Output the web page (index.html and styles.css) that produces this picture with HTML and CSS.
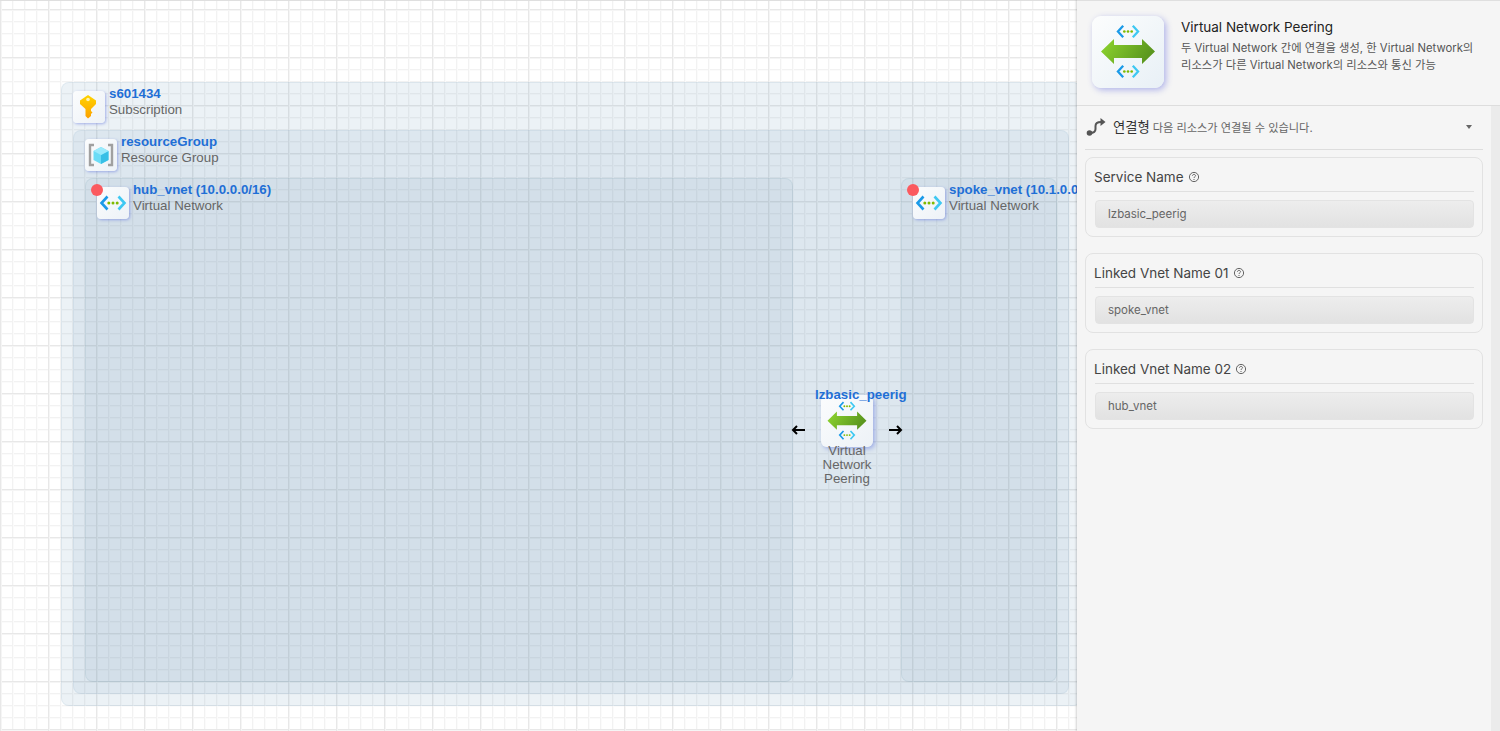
FILE: index.html
```html
<!DOCTYPE html>
<html lang="ko">
<head>
<meta charset="utf-8">
<title>Virtual Network Peering</title>
<link rel="stylesheet" href="styles.css">
</head>
<body>
<svg class="defs" width="0" height="0" aria-hidden="true">
  <defs>
    <linearGradient id="arrowGrad" x1="0" y1="0" x2="1" y2="0.3">
      <stop offset="0" stop-color="#8fd62f"/>
      <stop offset="1" stop-color="#5a961e"/>
    </linearGradient>
    <linearGradient id="keyGrad" x1="0" y1="0" x2="0" y2="1">
      <stop offset="0" stop-color="#ffd400"/>
      <stop offset="1" stop-color="#fca000"/>
    </linearGradient>
    <symbol id="vnet" viewBox="0 0 32 32">
      <path d="M10.500 9.500 4.500 16l6 6.500" fill="none" stroke="#1a9ae8" stroke-width="2.600"/>
      <path d="M21.500 9.500 27.500 16l-6 6.500" fill="none" stroke="#3ec8f2" stroke-width="2.600"/>
      <circle cx="11.800" cy="16" r="1.500" fill="#7fba00"/>
      <circle cx="16" cy="16" r="1.500" fill="#7fba00"/>
      <circle cx="20.200" cy="16" r="1.500" fill="#7fba00"/>
    </symbol>
    <symbol id="peer" viewBox="0 0 72 72">
      <use href="#vnet" x="22" y="1.500" width="28" height="28"/>
      <use href="#vnet" x="22" y="41.500" width="28" height="28"/>
      <path d="M9 35.500 22 23v6h28v-6l13 12.500L50 48v-6H22v6z" fill="url(#arrowGrad)"/>
    </symbol>
  </defs>
</svg>

<main class="canvas">
  <section class="group group-sub">
    <header class="group-head">
      <span class="icon-card">
        <svg class="icon" viewBox="0 0 32 32"><path d="M15 4 23 9.500V13L18 18v2l1.500 1.500L18 23v2l-3 2.500L12.500 25V18L7 13V9.500z" fill="url(#keyGrad)"/><circle cx="15" cy="8.500" r="1.800" fill="#fff3b0"/></svg>
      </span>
      <div class="group-text"><strong class="name">s601434</strong><span class="kind">Subscription</span></div>
    </header>
    <section class="group group-rg">
      <header class="group-head">
        <span class="icon-card">
          <svg class="icon" viewBox="0 0 32 32">
            <path d="M9 6H5v20h4" fill="none" stroke="#a0a0a0" stroke-width="2.400"/>
            <path d="M23 6h4v20h-4" fill="none" stroke="#a0a0a0" stroke-width="2.400"/>
            <path d="M16 8l7.500 4v9L16 25l-7.500-4v-9z" fill="#6adcf6"/>
            <path d="M16 16l7.500-4v9L16 25z" fill="#38bfe6"/>
            <path d="M16 8l7.500 4-7.500 4-7.500-4z" fill="#9aeafc"/>
          </svg>
        </span>
        <div class="group-text"><strong class="name">resourceGroup</strong><span class="kind">Resource Group</span></div>
      </header>
      <div class="vnet-row">
        <section class="group group-vnet group-hub">
          <span class="dot"></span>
          <header class="group-head">
            <span class="icon-card"><svg class="icon"><use href="#vnet"/></svg></span>
            <div class="group-text"><strong class="name">hub_vnet (10.0.0.0/16)</strong><span class="kind">Virtual Network</span></div>
          </header>
        </section>
        <section class="group group-vnet group-spoke">
          <span class="dot"></span>
          <header class="group-head">
            <span class="icon-card"><svg class="icon"><use href="#vnet"/></svg></span>
            <div class="group-text"><strong class="name">spoke_vnet (10.1.0.0/16)</strong><span class="kind">Virtual Network</span></div>
          </header>
        </section>
      </div>
    </section>
  </section>

  <div class="peer-node">
    <span class="icon-card icon-card-peer"><svg class="icon-peer"><use href="#peer"/></svg></span>
    <strong class="name peer-name">lzbasic_peerig</strong>
    <span class="peer-kind">Virtual Network Peering</span>
    <svg class="flow flow-left" viewBox="0 0 14 10"><path d="M14 5H2M6 1 2 5l4 4" fill="none" stroke="#000" stroke-width="2"/></svg>
    <svg class="flow flow-right" viewBox="0 0 14 10"><path d="M0 5h12M8 1l4 4-4 4" fill="none" stroke="#000" stroke-width="2"/></svg>
  </div>
</main>

<aside class="panel">
  <header class="panel-head">
    <span class="panel-icon"><svg class="panel-icon-svg"><use href="#peer"/></svg></span>
    <div class="panel-title">
      <h1>Virtual Network Peering</h1>
      <p>두 Virtual Network 간에 연결을 생성, 한 Virtual Network의 리소스가 다른 Virtual Network의 리소스와 통신 가능</p>
    </div>
  </header>
  <div class="panel-body">
    <div class="panel-content">
      <div class="connect-row">
        <svg class="connect-icon" viewBox="0 0 20 20"><circle cx="3.500" cy="16" r="2.800" fill="#555"/><path d="M4 16c4 0 5.500-1 5.500-4V9c0-3 1.500-4 5.500-4" fill="none" stroke="#555" stroke-width="2"/><path d="M14.500 1l5 4-5 4z" fill="#555"/></svg>
        <span class="connect-label">연결형</span>
        <span class="connect-note">다음 리소스가 연결될 수 있습니다.</span>
        <span class="caret"></span>
      </div>
      <section class="field">
        <div class="field-label">Service Name<svg class="help" viewBox="0 0 12 12"><circle cx="6" cy="6" r="4.600" fill="none" stroke="#555" stroke-width=".9"/><path d="M4.500 4.800C4.500 3.800 5.200 3.400 6 3.400s1.500.5 1.500 1.300C7.500 5.800 6 5.800 6 7" fill="none" stroke="#555" stroke-width=".9"/><circle cx="6" cy="8.500" r=".6" fill="#555"/></svg></div>
        <div class="field-input">lzbasic_peerig</div>
      </section>
      <section class="field">
        <div class="field-label">Linked Vnet Name 01<svg class="help" viewBox="0 0 12 12"><circle cx="6" cy="6" r="4.600" fill="none" stroke="#555" stroke-width=".9"/><path d="M4.500 4.800C4.500 3.800 5.200 3.400 6 3.400s1.500.5 1.500 1.300C7.500 5.800 6 5.800 6 7" fill="none" stroke="#555" stroke-width=".9"/><circle cx="6" cy="8.500" r=".6" fill="#555"/></svg></div>
        <div class="field-input">spoke_vnet</div>
      </section>
      <section class="field">
        <div class="field-label">Linked Vnet Name 02<svg class="help" viewBox="0 0 12 12"><circle cx="6" cy="6" r="4.600" fill="none" stroke="#555" stroke-width=".9"/><path d="M4.500 4.800C4.500 3.800 5.200 3.400 6 3.400s1.500.5 1.500 1.300C7.500 5.800 6 5.800 6 7" fill="none" stroke="#555" stroke-width=".9"/><circle cx="6" cy="8.500" r=".6" fill="#555"/></svg></div>
        <div class="field-input">hub_vnet</div>
      </section>
    </div>
    <div class="scroll-track"></div>
  </div>
</aside>
</body>
</html>
```
FILE: styles.css
```css
* { box-sizing: border-box; }
html, body { margin: 0; height: 100%; overflow: hidden; }
body {
  display: flex;
  width: 1500px;
  height: 731px;
  font-family: "Liberation Sans", Arial, sans-serif;
  background: #fff;
}
.defs { position: absolute; }

/* canvas */
.canvas {
  position: relative;
  flex: none;
  width: 1077px;
  height: 731px;
  overflow: hidden;
  border-top: 1px solid #dfdfdf;
  background-color: #fff;
  background-image:
    linear-gradient(to right, #e8e8e8 1px, #f5f5f5 1px, #f5f5f5 2px, transparent 2px),
    linear-gradient(to bottom, #e8e8e8 1px, #f5f5f5 1px, #f5f5f5 2px, transparent 2px),
    linear-gradient(to right, #f2f2f2 1px, #fbfbfb 1px, #fbfbfb 2px, transparent 2px),
    linear-gradient(to bottom, #f2f2f2 1px, #fbfbfb 1px, #fbfbfb 2px, transparent 2px);
  background-size: 48px 48px, 48px 48px, 12px 12px, 12px 12px;
  background-position: 0 8px, 0 8px, 0 8px, 0 8px;
}
.group {
  display: flex;
  flex-direction: column;
  border-radius: 8px;
  padding: 8px 11px 11px;
}
.group-sub {
  position: absolute;
  left: 61px;
  top: 81px;
  width: 1020px;
  height: 624px;
  background: rgba(70, 125, 165, .1);
  border: 1px solid rgba(70, 125, 165, .08);
}
.group-rg {
  flex: 1;
  background: rgba(90, 135, 175, .1);
  border: 1px solid rgba(90, 135, 175, .08);
}
.group-vnet {
  position: relative;
  background: rgba(100, 145, 165, .08);
  border: 1px solid rgba(100, 145, 165, .12);
}
.group-head {
  display: flex;
  gap: 4px;
  height: 39px;
  flex: none;
}
.group-text {
  display: flex;
  flex-direction: column;
  margin-top: -5px;
  white-space: nowrap;
}
.name {
  font-size: 13.300px;
  line-height: 16px;
  font-weight: 700;
  color: #1f6fd6;
}
.kind {
  font-size: 13.300px;
  line-height: 16px;
  color: #666;
}
.icon-card {
  display: flex;
  align-items: center;
  justify-content: center;
  flex: none;
  width: 32px;
  height: 32px;
  border-radius: 4px;
  background: linear-gradient(135deg, #fbfcfd, #edf2f7);
  box-shadow: 1px 1px 3px rgba(90, 110, 220, .5);
}
.icon { width: 32px; height: 32px; }
.vnet-row {
  flex: 1;
  display: flex;
  justify-content: space-between;
}
.group-hub { width: 708px; }
.group-spoke { width: 156px; }
.dot {
  position: absolute;
  left: 5px;
  top: 5px;
  width: 12px;
  height: 12px;
  border-radius: 50%;
  background: #fb5a5f;
  z-index: 1;
}

/* peering node */
.peer-node {
  position: absolute;
  left: 821px;
  top: 394px;
  width: 52px;
  height: 92px;
  display: flex;
  flex-direction: column;
  align-items: center;
}
.icon-card-peer {
  width: 52px;
  height: 52px;
  border-radius: 6px;
  box-shadow: 2px 2px 4px rgba(90, 110, 220, .45);
}
.icon-peer { width: 52px; height: 52px; }
.peer-name {
  position: absolute;
  left: -6px;
  top: -8px;
  white-space: nowrap;
}
.peer-kind {
  width: 70px;
  margin-top: -3px;
  text-align: center;
  font-size: 13.300px;
  line-height: 14px;
  color: #666;
}
.flow { position: absolute; width: 14px; height: 10px; top: 30px; }
.flow-left { left: -30px; }
.flow-right { left: 68px; }

/* panel */
.panel {
  flex: none;
  width: 423px;
  height: 731px;
  display: flex;
  flex-direction: column;
  background: #f5f5f5;
  border-top: 1px solid #dfdfdf;
  box-shadow: -1px 0 2px rgba(0, 0, 0, .18);
  z-index: 2;
  font-family: Inter, "Noto Sans CJK KR", sans-serif;
}
.panel-head {
  flex: none;
  display: flex;
  height: 105px;
  padding: 15px 15px 0 15px;
  gap: 17px;
  border-bottom: 1px solid #ddd;
}
.panel-icon {
  display: flex;
  flex: none;
  width: 72px;
  height: 72px;
  border-radius: 9px;
  background: linear-gradient(135deg, #fcfdfd, #e8f0f6);
  box-shadow: 2px 2px 6px rgba(90, 100, 220, .45);
}
.panel-icon-svg { width: 72px; height: 72px; }
.panel-title h1 {
  margin: 2px 0 4px;
  font-size: 13.500px;
  line-height: 18px;
  font-weight: 400;
  color: #222;
}
.panel-title p {
  margin: 0;
  width: 300px;
  font-size: 11.300px;
  line-height: 17px;
  color: #555;
  word-break: keep-all;
}
.panel-body {
  flex: 1;
  display: flex;
  min-height: 0;
}
.panel-content {
  flex: 1;
  padding: 0 8px;
}
.scroll-track {
  flex: none;
  width: 9px;
  background: #ebebeb;
}
.connect-row {
  display: flex;
  align-items: center;
  height: 44px;
  padding: 0 0 2px 1px;
  border-bottom: 1px solid #ddd;
  margin-bottom: 7px;
}
.connect-icon { width: 20px; height: 20px; flex: none; margin-right: 7px; }
.connect-label { font-size: 13.300px; color: #333; margin-right: 3px; }
.connect-note { font-size: 11.200px; color: #666; flex: 1; }
.caret {
  width: 0;
  height: 0;
  margin-right: 11px;
  border: 3.500px solid transparent;
  border-top: 4px solid #666;
  border-bottom: 0;
}
.field {
  height: 80px;
  margin-bottom: 16px;
  padding: 9px 8px 0 9px;
  border: 1px solid #e2e2e2;
  border-radius: 8px;
}
.field-label {
  display: flex;
  align-items: center;
  gap: 4px;
  height: 25px;
  padding-bottom: 5px;
  border-bottom: 1px solid #e0e0e0;
  font-size: 13.500px;
  text-indent: -1px;
  color: #444;
}
.help { width: 12px; height: 12px; }
.field-input {
  display: flex;
  align-items: center;
  height: 28px;
  margin-top: 8px;
  padding-left: 12px;
  border: 1px solid #e3e3e3;
  border-radius: 4px;
  background: linear-gradient(to bottom, #ededed, #e2e2e2);
  font-size: 11.500px;
  color: #666;
}
```
